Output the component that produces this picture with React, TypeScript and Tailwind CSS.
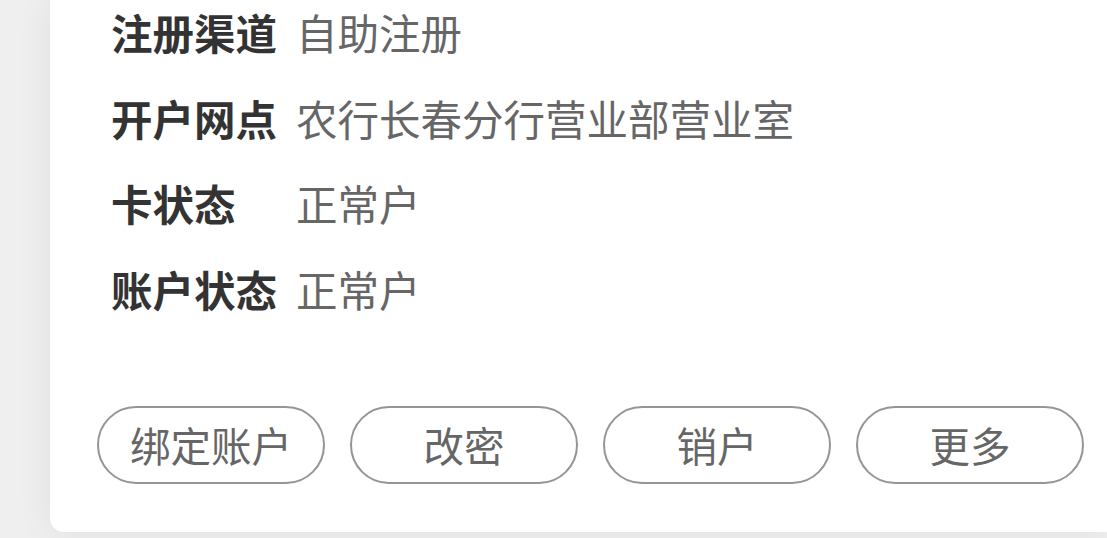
const rows = [
  { label: '注册渠道', value: '自助注册' },
  { label: '开户网点', value: '农行长春分行营业部营业室' },
  { label: '卡状态', value: '正常户' },
  { label: '账户状态', value: '正常户' },
];

const actions = ['绑定账户', '改密', '销户', '更多'];

export default function App() {
  return (
    <div
      className="h-[538px] w-[1107px] overflow-hidden bg-[#efefef] pl-[50px]"
      style={{ fontFamily: '"Noto Sans CJK SC", "Noto Sans", sans-serif' }}
    >
      <div className="flex h-[532px] flex-col rounded-bl-[14px] bg-white shadow-[0_0_36px_rgba(0,0,0,0.07)]">
        {/* Info rows */}
        <div className="-mt-[10px] flex flex-col pl-[61px]">
          {rows.map((row) => (
            <div key={row.label} className="flex h-[85.5px] items-center text-[41.5px] leading-none">
              <span className="w-[185px] shrink-0 font-bold text-[#333333]">{row.label}</span>
              <span className="text-[#666666]">{row.value}</span>
            </div>
          ))}
        </div>

        {/* Action buttons */}
        <div className="mt-auto flex gap-[25px] pb-[48px] pl-[47px]">
          {actions.map((a) => (
            <button
              key={a}
              className="flex h-[78px] w-[228px] items-center justify-center rounded-full border-[2.5px] border-[#959595] text-[40.5px] leading-none text-[#666666]"
            >
              {a}
            </button>
          ))}
        </div>
      </div>
    </div>
  );
}
